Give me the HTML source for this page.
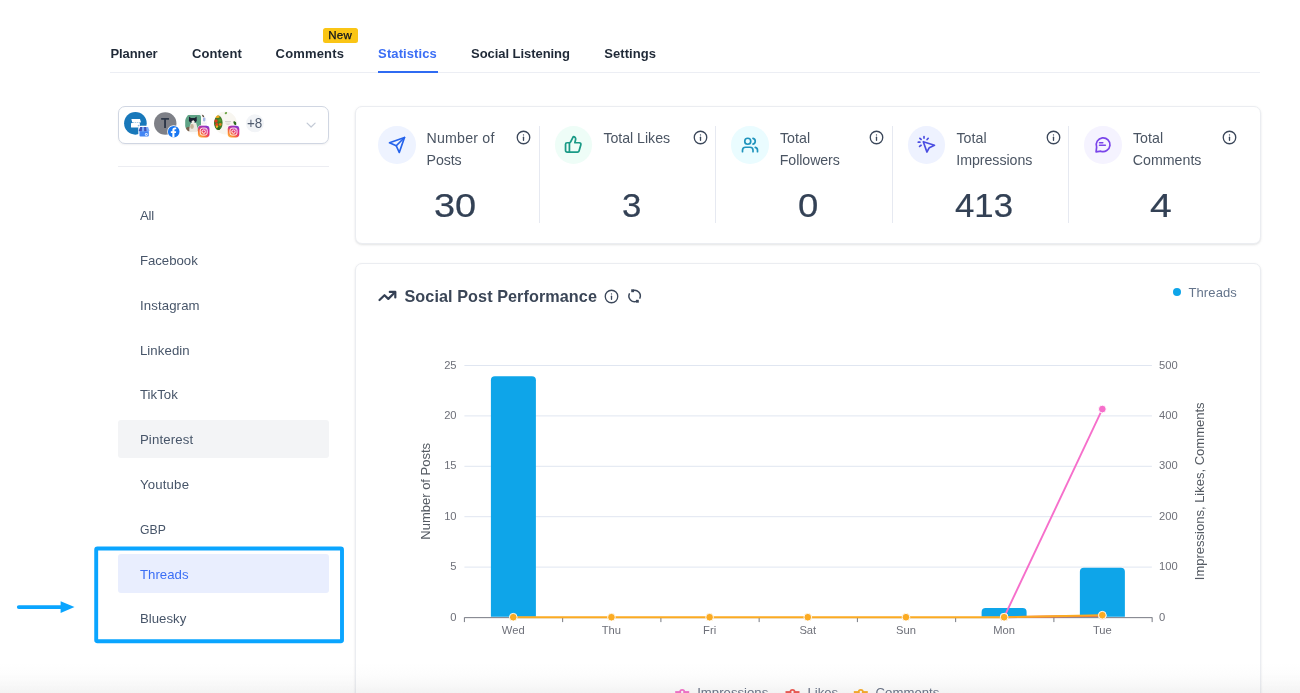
<!DOCTYPE html>
<html lang="en"><head><meta charset="utf-8"><title>Statistics</title>
<style>
html,body{margin:0;padding:0;background:#fff;}
body{width:1300px;height:693px;overflow:hidden;font-family:"Liberation Sans",sans-serif;}
#page{position:relative;width:1300px;height:693px;overflow:hidden;will-change:transform;}
.t{position:absolute;white-space:pre;line-height:1;font-family:"Liberation Sans",sans-serif;}
.a{position:absolute;}
.card{position:absolute;background:#fff;border:1px solid #ebedf1;border-radius:7px;box-shadow:0 1px 3px rgba(15,23,42,0.08),0 1px 2px rgba(15,23,42,0.05);box-sizing:border-box;}
.div{position:absolute;width:1px;background:#e6e9f1;top:126px;height:97px;}
.ic{position:absolute;width:37.4px;height:37.4px;border-radius:50%;top:126.2px;}
.ic svg{position:absolute;left:50%;top:50%;width:18px;height:18px;margin:-9px 0 0 -9px;fill:none;stroke-width:2.25;stroke-linecap:round;stroke-linejoin:round;}
.info{position:absolute;width:15px;height:15px;fill:none;stroke:#3b475a;stroke-width:2.1;stroke-linecap:round;stroke-linejoin:round;}
svg{display:block;overflow:visible;}
.num{-webkit-text-stroke:0.2px #334155;}
.new{-webkit-text-stroke:0.25px #0c111d;}

</style></head>
<body>
<div id="page">
<!-- nav -->
<div class="a" style="left:110px;top:72px;width:1150px;height:1px;background:#eceef4"></div>
<div class="a" style="left:378px;top:70.8px;width:60px;height:2.2px;background:#2f6bf2"></div>
<div class="a" style="left:322.8px;top:28px;width:35px;height:14.8px;background:#fac515;border-radius:2.5px"></div>

<!-- account selector -->
<div class="a" style="left:118px;top:106px;width:211px;height:38px;box-sizing:border-box;border:1px solid #d0d6e2;border-radius:7px;background:#fff;box-shadow:0 1px 2px rgba(16,24,40,0.06)"></div>
<svg class="a" style="left:118px;top:105px" width="212" height="40" viewBox="118 105 212 40">
  <defs>
    <clipPath id="c3"><circle cx="196" cy="123.2" r="11.3"/></clipPath>
    <clipPath id="c3b"><rect x="185.2" y="114.9" width="15.8" height="16.3" rx="1.6"/></clipPath>
    <clipPath id="c4"><circle cx="225.4" cy="123" r="11.4"/></clipPath>
    <linearGradient id="ig" x1="0.1" y1="1" x2="0.9" y2="0">
      <stop offset="0" stop-color="#fdc04f"/><stop offset="0.28" stop-color="#f9762f"/><stop offset="0.55" stop-color="#e8326f"/><stop offset="0.8" stop-color="#c12ba6"/><stop offset="1" stop-color="#7a3fd6"/>
    </linearGradient>
    <linearGradient id="ig2" x1="0" y1="0" x2="0" y2="1">
      <stop offset="0" stop-color="#6a3fe0" stop-opacity="0.55"/><stop offset="0.35" stop-color="#6a3fe0" stop-opacity="0"/>
    </linearGradient>
    <filter id="bl" x="-20%" y="-20%" width="140%" height="140%"><feGaussianBlur stdDeviation="0.35"/></filter>
  </defs>
  <!-- avatar 1 -->
  <circle cx="135.4" cy="123.35" r="11.3" fill="#1878ba"/>
  <path d="M131.4 119h8.6l0.9 2.9q-0.6 1.1-1.7 0.6q-0.9 0.8-1.8 0q-0.9 0.8-1.8 0q-0.9 0.8-1.800 0q-1.100 0.500-1.700-0.600z" fill="#fff"/>
  <rect x="131" y="122.900" width="8.900" height="4.500" rx="0.500" fill="#fff"/>
  <circle cx="138.600" cy="125.600" r="0.900" fill="#8fb9e6"/>
  <rect x="138.300" y="125.700" width="11.600" height="11.300" rx="2.600" fill="#fff"/>
  <path d="M140.200 126.900h7.900l1.200 3.300q-0.100 1.200-1.300 1.200h-7.700q-1.200 0-1.300-1.200z" fill="#7baaf7"/>
  <path d="M140.200 126.900h1.900l-0.300 4.500h-1.500q-1.200 0-1.300-1.200z" fill="#3f51b5"/>
  <path d="M144.100 126.900h2l0.500 4.500h-2.500z" fill="#3f51b5"/>
  <path d="M139.500 131.200h9.300v4.200q0 1-1 1h-7.300q-1 0-1-1z" fill="#4285f4"/>
  <circle cx="146.300" cy="134.500" r="1.450" fill="#dbe7ff"/>
  <circle cx="146.300" cy="134.500" r="0.600" fill="#4285f4"/>
  <!-- avatar 2 -->
  <circle cx="165.250" cy="123.500" r="11.200" fill="#7e8087"/>
  <circle cx="173.700" cy="131.700" r="6.500" fill="#fff"/>
  <circle cx="173.700" cy="131.700" r="5.800" fill="#1877f2"/>
  <path d="M174.450 137.450v-4.350h1.450l0.280-1.800h-1.730v-1.150c0-0.550 0.200-0.900 0.950-0.900h0.850v-1.600c-0.300-0.040-0.850-0.100-1.450-0.100c-1.500 0-2.450 0.900-2.450 2.500v1.250h-1.500v1.800h1.500v4.350z" fill="#fff"/>
  <!-- avatar 3 cat -->
  <g clip-path="url(#c3)">
    <rect x="184" y="111" width="25" height="25" fill="#fbfbfa"/>
    <g clip-path="url(#c3b)" filter="url(#bl)">
      <rect x="184" y="113.500" width="18" height="19" fill="#5fa386"/>
      <rect x="184" y="129" width="18" height="3" fill="#a98858"/>
      <ellipse cx="189.500" cy="129.300" rx="3.800" ry="2.600" fill="#77614d"/>
      <path d="M189.300 131.500c-0.200-3.500 0.600-6.500 1.800-8.500h5c1 2.500 1.400 5.500 1 8.500z" fill="#ece8e0"/>
      <path d="M189.100 116.600l1.800 1.500h3.900l1.800-1.500l0.200 4.300c-0.800 1.300-2.300 1.800-3.900 1.800s-3.200-0.500-4-1.800z" fill="#1f2233"/>
      <path d="M191.600 121.600l1.500-1.600l1.500 1.600v2.400h-3z" fill="#f2efe9"/>
      <ellipse cx="192" cy="126.500" rx="1.800" ry="2.400" fill="#b79d7e" opacity="0.700"/>
    </g>
    <g filter="url(#bl)">
      <path d="M201.800 114.800l1.500 0.300l1 1.900l-1.300 0.300z" fill="#5b4a3c"/>
      <rect x="203" y="117.600" width="2.400" height="3.800" rx="0.800" fill="#a7b6e6"/>
      <rect x="201.800" y="122.800" width="4.500" height="0.600" fill="#dfe1e6"/>
    </g>
  </g>
  <rect x="197.40" y="125.30" width="12.6" height="12.6" rx="3.9" fill="#fff"/>
  <rect x="197.90" y="125.80" width="11.6" height="11.6" rx="3.4" fill="url(#ig)"/>
  <rect x="197.90" y="125.80" width="11.6" height="11.6" rx="3.4" fill="url(#ig2)"/>
  <rect x="200.20" y="128.10" width="7" height="7" rx="2.1" fill="none" stroke="#fff" stroke-width="0.9"/>
  <circle cx="203.70" cy="131.60" r="1.7" fill="none" stroke="#fff" stroke-width="0.9"/>
  <circle cx="205.90" cy="129.40" r="0.45" fill="#fff"/>
  <!-- avatar 4 food -->
  <g clip-path="url(#c4)">
    <rect x="212" y="110" width="27" height="27" fill="#f8f6f0"/>
    <g filter="url(#bl)">
      <ellipse cx="218.200" cy="122.800" rx="4.400" ry="7.200" fill="#3f7d27"/>
      <ellipse cx="217.400" cy="116.700" rx="2.300" ry="1.200" fill="#f2a61c"/>
      <circle cx="216" cy="121" r="1.700" fill="#e23c1f"/>
      <circle cx="216.800" cy="124.600" r="1.600" fill="#e0461f"/>
      <circle cx="219.800" cy="120.300" r="1.500" fill="#4f9a2e"/>
      <circle cx="220.300" cy="124.500" r="1.400" fill="#d9821f"/>
      <circle cx="217" cy="126.800" r="1.200" fill="#f0b024"/>
      <circle cx="218.700" cy="128.400" r="1.500" fill="#2c661b"/>
      <ellipse cx="225.900" cy="113.100" rx="1.300" ry="1" fill="#6aa341" transform="rotate(-35 225.900 113.100)"/>
      <rect x="225" y="121.200" width="6" height="0.700" fill="#c9c7c0"/>
      <rect x="225.500" y="122.700" width="5" height="0.700" fill="#cfcdc6"/>
      <rect x="226.500" y="124.200" width="3" height="0.700" fill="#d4d2cc"/>
      <ellipse cx="234.900" cy="123" rx="1.300" ry="2.200" fill="#2f6a1f" transform="rotate(-25 234.900 123)"/>
      <circle cx="235.300" cy="121" r="0.800" fill="#f3f0e0"/>
    </g>
  </g>
  <rect x="227.20" y="125.30" width="12.6" height="12.6" rx="3.9" fill="#fff"/>
  <rect x="227.70" y="125.80" width="11.6" height="11.6" rx="3.4" fill="url(#ig)"/>
  <rect x="227.70" y="125.80" width="11.6" height="11.6" rx="3.4" fill="url(#ig2)"/>
  <rect x="230.00" y="128.10" width="7" height="7" rx="2.1" fill="none" stroke="#fff" stroke-width="0.9"/>
  <circle cx="233.50" cy="131.60" r="1.7" fill="none" stroke="#fff" stroke-width="0.9"/>
  <circle cx="235.70" cy="129.40" r="0.45" fill="#fff"/>
  <!-- +8 -->
  <circle cx="254.900" cy="123.300" r="9" fill="#f2f4f7"/>
  <!-- chevron -->
  <path d="M307.100 123.100l4 3.900 4-3.900" fill="none" stroke="#c3cad6" stroke-width="1.200" stroke-linecap="round" stroke-linejoin="round"/>
</svg>
<div class="a" style="left:118px;top:166px;width:211px;height:1px;background:#ecedf2"></div>

<!-- sidebar highlight rows -->
<div class="a" style="left:118px;top:419.600px;width:211px;height:38.600px;background:#f3f4f6;border-radius:3px"></div>
<div class="a" style="left:118px;top:554px;width:211px;height:38.800px;background:#e9eefe;border-radius:3px"></div>

<!-- annotation box + arrow -->
<svg class="a" style="left:90px;top:540px" width="260" height="110" viewBox="90 540 260 110"><rect x="96.2" y="548.5" width="245.8" height="92.7" rx="1.2" fill="none" stroke="#0aa5ff" stroke-width="3.9"/></svg>
<svg class="a" style="left:0;top:590px" width="90" height="34" viewBox="0 590 90 34">
  <path d="M18.8 607.1H62" stroke="#0aa5ff" stroke-width="3.8" stroke-linecap="round" fill="none"/>
  <path d="M60.6 601.2L74.5 607.1L60.6 612.900Z" fill="#0aa5ff"/>
</svg>

<!-- cards -->
<div class="card" style="left:354.7px;top:106.3px;width:906.1px;height:137.4px"></div>
<div class="card" style="left:354.7px;top:263.3px;width:906.1px;height:460px"></div>

<div class="div" style="left:538.90px"></div>
<div class="div" style="left:715.40px"></div>
<div class="div" style="left:891.90px"></div>
<div class="div" style="left:1068.40px"></div>

<div class="ic" style="left:378.35px;background:#eef3ff"><svg viewBox="0 0 24 24" stroke="#2563eb"><path d="m22 2-7 20-4-9-9-4Z"/><path d="M22 2 11 13"/></svg></div>
<div class="ic" style="left:554.85px;background:#eefdf7"><svg viewBox="0 0 24 24" stroke="#1a9a86" style="width:18.6px;height:18.6px;margin:-9.8px 0 0 -9.3px"><path d="M7 10v12"/><path d="M15 5.88 14 10h5.83a2 2 0 0 1 1.92 2.56l-2.33 8A2 2 0 0 1 17.5 22H4a2 2 0 0 1-2-2v-8a2 2 0 0 1 2-2h2.76a2 2 0 0 0 1.79-1.11L12 2a3.13 3.13 0 0 1 3 3.88Z"/></svg></div>
<div class="ic" style="left:731.35px;background:#eafcff"><svg viewBox="0 0 24 24" stroke="#2094bd"><path d="M16 21v-2a4 4 0 0 0-4-4H6a4 4 0 0 0-4 4v2"/><circle cx="9" cy="7" r="4"/><path d="M22 21v-2a4 4 0 0 0-3-3.87"/><path d="M16 3.13a4 4 0 0 1 0 7.75"/></svg></div>
<div class="ic" style="left:907.85px;background:#eef2ff"></div><svg class="a" style="left:905px;top:124px;fill:none;stroke:#4b4ee2;stroke-width:1.7;stroke-linecap:round;stroke-linejoin:round" width="42" height="42" viewBox="905 124 42 42"><path d="M923.3 141.7L934.5 145.2L929.3 147.7L926.9 152.0Z"/><path d="M924 136.7V138.1"/><path d="M919.9 138.3L921.1 139.4"/><path d="M928.2 138.3L927.1 139.5"/><path d="M918.3 142.2H919.9"/><path d="M921.1 145.3L919.6 146.4"/></svg>
<div class="ic" style="left:1084.35px;background:#f5f3ff"></div><svg class="a" style="left:1082px;top:124px;fill:none;stroke:#7a45ea;stroke-width:1.7;stroke-linecap:round;stroke-linejoin:round" width="42" height="42" viewBox="1082 124 42 42"><path d="M1096.62 147.06A6.9 6.9 0 1 1 1100.74 151.18L1096.1 151.8Z"/><path d="M1099.5 142.7H1102.8" stroke-width="1.5"/><path d="M1099.5 145.3H1105.4" stroke-width="1.5"/></svg>

<svg class="info" style="left:516.45px;top:129.75px" viewBox="0 0 24 24"><circle cx="12" cy="12" r="10"/><path d="M12 16.500v-5"/><path d="M12 7.800h.01"/></svg>
<svg class="info" style="left:692.95px;top:129.75px" viewBox="0 0 24 24"><circle cx="12" cy="12" r="10"/><path d="M12 16.500v-5"/><path d="M12 7.800h.01"/></svg>
<svg class="info" style="left:869.45px;top:129.75px" viewBox="0 0 24 24"><circle cx="12" cy="12" r="10"/><path d="M12 16.500v-5"/><path d="M12 7.800h.01"/></svg>
<svg class="info" style="left:1045.95px;top:129.75px" viewBox="0 0 24 24"><circle cx="12" cy="12" r="10"/><path d="M12 16.500v-5"/><path d="M12 7.800h.01"/></svg>
<svg class="info" style="left:1222.45px;top:129.75px" viewBox="0 0 24 24"><circle cx="12" cy="12" r="10"/><path d="M12 16.500v-5"/><path d="M12 7.800h.01"/></svg>

<!-- chart header icons -->
<svg class="a" style="left:370px;top:280px;fill:none;stroke:#344054;stroke-width:2.200;stroke-linecap:round;stroke-linejoin:round" width="40" height="30" viewBox="370 280 40 30"><path d="M379.500 300L384.500 295.200L388.300 298.900L395 292.200"/><path d="M389.800 291.900H395.300V297.400"/></svg>
<svg class="info" style="left:604.20px;top:288.50px" viewBox="0 0 24 24"><circle cx="12" cy="12" r="10"/><path d="M12 16.500v-5"/><path d="M12 7.800h.01"/></svg>
<svg class="a" style="left:620px;top:282px" width="30" height="28" viewBox="620 282 30 28"><g fill="none" stroke="#3b475a" stroke-width="1.500" stroke-linecap="round"><path d="M632.65 290.64A5.7 5.7 0 0 1 639.88 298.14"/><path d="M629.32 293.86A5.7 5.7 0 0 0 636.55 301.36"/></g><path d="M631.200 289.300h2.900v2.900h-2.900z" fill="#3b475a"/><path d="M635.900 299.800h2.900v2.900h-2.900z" fill="#3b475a"/></svg>
<div class="a" style="left:1172.700px;top:288.400px;width:8px;height:8px;border-radius:50%;background:#0ea5e9"></div>

<svg class="a" style="left:0;top:0" width="1300" height="693" viewBox="0 0 1300 693" font-family="'Liberation Sans', sans-serif">
<path d="M464.4 567.10H1151.9" stroke="#e0e6f1" stroke-width="1" fill="none"/>
<path d="M464.4 516.70H1151.9" stroke="#e0e6f1" stroke-width="1" fill="none"/>
<path d="M464.4 466.30H1151.9" stroke="#e0e6f1" stroke-width="1" fill="none"/>
<path d="M464.4 415.90H1151.9" stroke="#e0e6f1" stroke-width="1" fill="none"/>
<path d="M464.4 365.50H1151.9" stroke="#e0e6f1" stroke-width="1" fill="none"/>
<text x="456.6" y="620.60" font-size="11.2" fill="#6e7079" text-anchor="end">0</text>
<text x="1159.0" y="620.60" font-size="11.2" fill="#6e7079">0</text>
<text x="456.6" y="570.20" font-size="11.2" fill="#6e7079" text-anchor="end">5</text>
<text x="1159.0" y="570.20" font-size="11.2" fill="#6e7079">100</text>
<text x="456.6" y="519.80" font-size="11.2" fill="#6e7079" text-anchor="end">10</text>
<text x="1159.0" y="519.80" font-size="11.2" fill="#6e7079">200</text>
<text x="456.6" y="469.40" font-size="11.2" fill="#6e7079" text-anchor="end">15</text>
<text x="1159.0" y="469.40" font-size="11.2" fill="#6e7079">300</text>
<text x="456.6" y="419.00" font-size="11.2" fill="#6e7079" text-anchor="end">20</text>
<text x="1159.0" y="419.00" font-size="11.2" fill="#6e7079">400</text>
<text x="456.6" y="368.60" font-size="11.2" fill="#6e7079" text-anchor="end">25</text>
<text x="1159.0" y="368.60" font-size="11.2" fill="#6e7079">500</text>
<path d="M490.90 616.7V380.28Q490.90 376.28 494.90 376.28H531.90Q535.90 376.28 535.90 380.28V616.7Z" fill="#0ea5e9"/>
<path d="M981.60 616.7V612.12Q981.60 608.12 985.60 608.12H1022.60Q1026.60 608.12 1026.60 612.12V616.7Z" fill="#0ea5e9"/>
<path d="M1079.88 616.7V571.80Q1079.88 567.80 1083.88 567.80H1120.88Q1124.88 567.80 1124.88 571.80V616.7Z" fill="#0ea5e9"/>
<path d="M464.4 617.65H1152.3000000000002" stroke="#777a83" stroke-width="1" fill="none"/>
<path d="M464.40 617.5v4.6" stroke="#777a83" stroke-width="1" fill="none"/>
<path d="M562.65 617.5v4.6" stroke="#777a83" stroke-width="1" fill="none"/>
<path d="M660.90 617.5v4.6" stroke="#777a83" stroke-width="1" fill="none"/>
<path d="M759.15 617.5v4.6" stroke="#777a83" stroke-width="1" fill="none"/>
<path d="M857.40 617.5v4.6" stroke="#777a83" stroke-width="1" fill="none"/>
<path d="M955.65 617.5v4.6" stroke="#777a83" stroke-width="1" fill="none"/>
<path d="M1053.90 617.5v4.6" stroke="#777a83" stroke-width="1" fill="none"/>
<path d="M1152.15 617.5v4.6" stroke="#777a83" stroke-width="1" fill="none"/>
<text x="513.25" y="634.1" font-size="11.2" fill="#6e7079" text-anchor="middle">Wed</text>
<text x="611.43" y="634.1" font-size="11.2" fill="#6e7079" text-anchor="middle">Thu</text>
<text x="709.61" y="634.1" font-size="11.2" fill="#6e7079" text-anchor="middle">Fri</text>
<text x="807.79" y="634.1" font-size="11.2" fill="#6e7079" text-anchor="middle">Sat</text>
<text x="905.97" y="634.1" font-size="11.2" fill="#6e7079" text-anchor="middle">Sun</text>
<text x="1004.15" y="634.1" font-size="11.2" fill="#6e7079" text-anchor="middle">Mon</text>
<text x="1102.33" y="634.1" font-size="11.2" fill="#6e7079" text-anchor="middle">Tue</text>
<text transform="translate(430.2 491.3) rotate(-90)" font-size="13" fill="#555b63" text-anchor="middle">Number of Posts</text>
<text transform="translate(1204.0 491.3) rotate(-90)" font-size="13" fill="#555b63" text-anchor="middle">Impressions, Likes, Comments</text>
<polyline points="1004.15,617.20 1102.33,409.05" fill="none" stroke="#f66fcb" stroke-width="1.9" stroke-linejoin="bevel"/><circle cx="1004.15" cy="617.20" r="3.85" fill="#f66fcb" stroke="#fff" stroke-width="0.9"/><circle cx="1102.33" cy="409.05" r="3.85" fill="#f66fcb" stroke="#fff" stroke-width="0.9"/>
<polyline points="1004.15,617.20 1102.33,615.69" fill="none" stroke="#f0554e" stroke-width="1.9" stroke-linejoin="bevel"/><circle cx="1004.15" cy="617.20" r="3.85" fill="#f0554e" stroke="#fff" stroke-width="0.9"/><circle cx="1102.33" cy="615.69" r="3.85" fill="#f0554e" stroke="#fff" stroke-width="0.9"/>
<polyline points="513.25,617.20 611.43,617.20 709.61,617.20 807.79,617.20 905.97,617.20 1004.15,617.20 1102.33,615.18" fill="none" stroke="#fbab23" stroke-width="1.9" stroke-linejoin="bevel"/><circle cx="513.25" cy="617.20" r="3.85" fill="#fbab23" stroke="#fff" stroke-width="0.9"/><circle cx="611.43" cy="617.20" r="3.85" fill="#fbab23" stroke="#fff" stroke-width="0.9"/><circle cx="709.61" cy="617.20" r="3.85" fill="#fbab23" stroke="#fff" stroke-width="0.9"/><circle cx="807.79" cy="617.20" r="3.85" fill="#fbab23" stroke="#fff" stroke-width="0.9"/><circle cx="905.97" cy="617.20" r="3.85" fill="#fbab23" stroke="#fff" stroke-width="0.9"/><circle cx="1004.15" cy="617.20" r="3.85" fill="#fbab23" stroke="#fff" stroke-width="0.9"/><circle cx="1102.33" cy="615.18" r="3.85" fill="#fbab23" stroke="#fff" stroke-width="0.9"/>
<path d="M675.20 692.1h14" stroke="#f66fcb" stroke-width="2" fill="none"/><circle cx="682.2" cy="692.0" r="2.1" fill="#fff" stroke="#f66fcb" stroke-width="1.8"/><text x="697.2" y="696.6" font-size="13.2" fill="#667085">Impressions</text>
<path d="M785.50 692.1h14" stroke="#f0554e" stroke-width="2" fill="none"/><circle cx="792.5" cy="692.0" r="2.1" fill="#fff" stroke="#f0554e" stroke-width="1.8"/><text x="807.4" y="696.6" font-size="13.2" fill="#667085">Likes</text>
<path d="M853.80 692.1h14" stroke="#fbab23" stroke-width="2" fill="none"/><circle cx="860.8" cy="692.0" r="2.1" fill="#fff" stroke="#fbab23" stroke-width="1.8"/><text x="875.6" y="696.6" font-size="13.2" fill="#667085">Comments</text>
</svg>

<!-- bottom fade -->
<div class="a" style="left:0;top:662px;width:1300px;height:31px;background:linear-gradient(to bottom,rgba(120,120,120,0) 0%,rgba(120,120,120,0.015) 40%,rgba(120,120,120,0.05) 75%,rgba(120,120,120,0.09) 100%)"></div>

<div class="t " style="left:110.41px;top:46.80px;font-size:13px;font-weight:700;color:#1f2937;letter-spacing:-0.081px">Planner</div>
<div class="t " style="left:191.91px;top:46.80px;font-size:13px;font-weight:700;color:#1f2937;letter-spacing:0.148px">Content</div>
<div class="t " style="left:275.61px;top:46.80px;font-size:13px;font-weight:700;color:#1f2937;letter-spacing:0.159px">Comments</div>
<div class="t " style="left:378.11px;top:46.80px;font-size:13px;font-weight:700;color:#3b6ef5;letter-spacing:0.099px">Statistics</div>
<div class="t " style="left:471.11px;top:46.80px;font-size:13px;font-weight:700;color:#1f2937;letter-spacing:-0.059px">Social Listening</div>
<div class="t " style="left:604.21px;top:46.80px;font-size:13px;font-weight:700;color:#1f2937;letter-spacing:0.086px">Settings</div>
<div class="t new" style="left:328.25px;top:30.27px;font-size:11.5px;font-weight:400;color:#0c111d;letter-spacing:0.292px">New</div>
<div class="t " style="left:139.90px;top:209.23px;font-size:13.2px;font-weight:400;color:#475569;letter-spacing:-0.228px">All</div>
<div class="t " style="left:139.90px;top:254.03px;font-size:13.2px;font-weight:400;color:#475569;letter-spacing:-0.003px">Facebook</div>
<div class="t " style="left:139.90px;top:298.83px;font-size:13.2px;font-weight:400;color:#475569;letter-spacing:0.132px">Instagram</div>
<div class="t " style="left:139.90px;top:343.63px;font-size:13.2px;font-weight:400;color:#475569;letter-spacing:0.096px">Linkedin</div>
<div class="t " style="left:139.90px;top:388.43px;font-size:13.2px;font-weight:400;color:#475569;letter-spacing:0.055px">TikTok</div>
<div class="t " style="left:139.90px;top:433.23px;font-size:13.2px;font-weight:400;color:#475569;letter-spacing:0.144px">Pinterest</div>
<div class="t " style="left:139.90px;top:478.03px;font-size:13.2px;font-weight:400;color:#475569;letter-spacing:0.196px">Youtube</div>
<div class="t " style="left:140.30px;top:522.83px;font-size:13.2px;font-weight:400;color:#475569;letter-spacing:0px;transform:scaleX(0.9261);transform-origin:0 0">GBP</div>
<div class="t " style="left:139.90px;top:567.63px;font-size:13.2px;font-weight:400;color:#3b6ef5;letter-spacing:0.052px">Threads</div>
<div class="t " style="left:139.90px;top:612.43px;font-size:13.2px;font-weight:400;color:#475569;letter-spacing:0.035px">Bluesky</div>
<div class="t " style="left:247.30px;top:116.04px;font-size:14.6px;font-weight:400;color:#4f5b6e;letter-spacing:0px;transform:scaleX(0.9194);transform-origin:0 0">+8</div>
<div class="t " style="left:161.20px;top:116.35px;font-size:14px;font-weight:700;color:#2d3748;letter-spacing:0px;transform:scaleX(0.9460);transform-origin:0 0">T</div>
<div class="t " style="left:426.57px;top:130.88px;font-size:14.2px;font-weight:400;color:#4b5563;letter-spacing:0.196px">Number of</div>
<div class="t " style="left:426.57px;top:152.98px;font-size:14.2px;font-weight:400;color:#4b5563;letter-spacing:-0.121px">Posts</div>
<div class="t " style="left:603.47px;top:130.88px;font-size:14.2px;font-weight:400;color:#4b5563;letter-spacing:-0.043px">Total Likes</div>
<div class="t " style="left:779.97px;top:130.88px;font-size:14.2px;font-weight:400;color:#4b5563;letter-spacing:0.058px">Total</div>
<div class="t " style="left:779.77px;top:152.98px;font-size:14.2px;font-weight:400;color:#4b5563;letter-spacing:-0.077px">Followers</div>
<div class="t " style="left:956.47px;top:130.88px;font-size:14.2px;font-weight:400;color:#4b5563;letter-spacing:0.058px">Total</div>
<div class="t " style="left:956.27px;top:152.98px;font-size:14.2px;font-weight:400;color:#4b5563;letter-spacing:-0.038px">Impressions</div>
<div class="t " style="left:1132.97px;top:130.88px;font-size:14.2px;font-weight:400;color:#4b5563;letter-spacing:0.058px">Total</div>
<div class="t " style="left:1132.77px;top:152.98px;font-size:14.2px;font-weight:400;color:#4b5563;letter-spacing:0.015px">Comments</div>
<div class="t num" style="left:433.58px;top:188.22px;font-size:34px;font-weight:400;color:#334155;letter-spacing:0px;transform:scaleX(1.1165);transform-origin:0 0">30</div>
<div class="t num" style="left:621.82px;top:188.22px;font-size:34px;font-weight:400;color:#334155;letter-spacing:0px;transform:scaleX(1.0232);transform-origin:0 0">3</div>
<div class="t num" style="left:797.54px;top:188.22px;font-size:34px;font-weight:400;color:#334155;letter-spacing:0px;transform:scaleX(1.0738);transform-origin:0 0">0</div>
<div class="t num" style="left:955.16px;top:188.22px;font-size:34px;font-weight:400;color:#334155;letter-spacing:0px;transform:scaleX(1.0238);transform-origin:0 0">413</div>
<div class="t num" style="left:1149.80px;top:188.22px;font-size:34px;font-weight:400;color:#334155;letter-spacing:0px;transform:scaleX(1.1526);transform-origin:0 0">4</div>
<div class="t " style="left:404.51px;top:288.09px;font-size:16.2px;font-weight:700;color:#3b4657;letter-spacing:0.076px">Social Post Performance</div>
<div class="t " style="left:1188.51px;top:285.90px;font-size:13px;font-weight:400;color:#64748b;letter-spacing:0.099px">Threads</div>
</div>
</body></html>
